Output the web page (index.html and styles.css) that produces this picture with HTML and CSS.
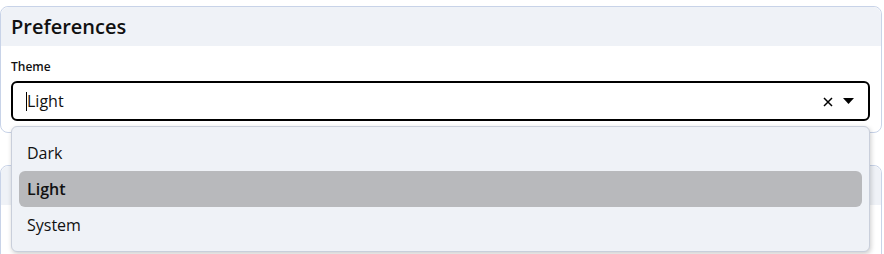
FILE: index.html
```html
<!DOCTYPE html>
<html lang="en">
<head>
    <meta charset="UTF-8">
    <title>Preferences</title>
    <link rel="stylesheet" href="styles.css">
</head>
<body>
    <div class="panel">
        <div class="panel-header">Preferences</div>
        <div class="panel-body">
            <label class="field-label">Theme</label>
            <div class="select">
                <div class="select-box">
                    <span class="select-value"><span class="caret"></span>Light</span>
                    <span class="select-icons">
                        <svg class="icon-clear" width="10" height="10" viewBox="0 0 10 10">
                            <path d="M1 1 L9 9 M9 1 L1 9" stroke="#000" stroke-width="1.5" fill="none"/>
                        </svg>
                        <svg class="icon-arrow" width="11" height="6" viewBox="0 0 11 6">
                            <path d="M0 0 H11 L5.5 6 Z" fill="#000"/>
                        </svg>
                    </span>
                </div>
                <ul class="select-menu">
                    <li class="option">Dark</li>
                    <li class="option selected">Light</li>
                    <li class="option">System</li>
                </ul>
            </div>
        </div>
    </div>

    <div class="panel">
        <div class="panel-header">&nbsp;</div>
        <div class="panel-body"></div>
    </div>
</body>
</html>
```

FILE: styles.css
```css
:root {
    --panel-bg: #eff2f7;
    --panel-border: #c8d3e8;
    --text-color: #111;
}

* {
    margin: 0;
    padding: 0;
    box-sizing: border-box;
}

body {
    font-family: 'Open Sans', 'Noto Sans', sans-serif;
    color: var(--text-color);
    background: #fff;
    padding-top: 6px;
    width: 882px;
}

.panel {
    border: 1px solid var(--panel-border);
    border-radius: 8px;
    margin-bottom: 32px;
}

.panel-header {
    background-color: var(--panel-bg);
    font-size: 20px;
    font-weight: 600;
    padding: 6px 10px 5px;
    line-height: 28px;
    border-radius: 8px 8px 0 0;
}

.panel-body {
    padding: 11px 11px 11px 10px;
    min-height: 60px;
}

.field-label {
    display: block;
    font-size: 12px;
    font-weight: 600;
    line-height: 20px;
    margin-bottom: 4px;
}

.select {
    position: relative;
}

.select-box {
    height: 40px;
    border: 2px solid #000;
    border-radius: 6px;
    display: flex;
    align-items: center;
    justify-content: space-between;
    padding: 0 14px 0 14px;
    background: #fff;
}

.select-value {
    font-size: 16px;
    display: flex;
    align-items: center;
}

.caret {
    display: inline-block;
    width: 1px;
    height: 19px;
    background: #000;
    margin-left: -1px;
}

.select-icons {
    display: flex;
    align-items: center;
    gap: 10px;
}

.icon-clear {
    margin-top: 1px;
}

.select-menu {
    position: absolute;
    top: 45px;
    left: 0;
    right: 0;
    list-style: none;
    background: var(--panel-bg);
    border: 1px solid #c9cfdb;
    border-radius: 6px;
    padding: 8px 7px;
    box-shadow: 1px 2px 5px rgba(0,0,0,0.2);
    z-index: 10;
}

.option {
    font-size: 16px;
    line-height: 36px;
    padding: 0 8px;
    border-radius: 6px;
}

.option.selected {
    background-color: #b8b9bc;
    font-weight: 600;
}
```
